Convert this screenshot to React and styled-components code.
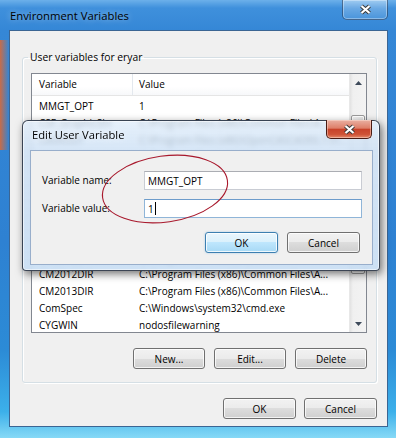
import React from "react";
import styled, { createGlobalStyle, css } from "styled-components";

const GlobalStyle = createGlobalStyle`
  html, body { margin: 0; padding: 0; }
  body {
    width: 396px;
    height: 438px;
    overflow: hidden;
    background: #2a7fd0;
    font-family: "Open Sans", "Noto Sans", "Liberation Sans", sans-serif;
    font-size: 10px;
    color: #000;
  }
  *, *::before, *::after { box-sizing: border-box; }
`;

const Window = styled.div`
  position: relative;
  width: 396px;
  height: 438px;
  display: flex;
  flex-direction: column;
  padding: 0 8px 11px 9px;
  background:
    linear-gradient(90deg, rgba(226, 104, 48, 0.85) 0px, rgba(226, 104, 48, 0) 9px) 0 40px / 9px 110px no-repeat,
    linear-gradient(180deg, #6cb0ea 0px, #3f90dc 8px, #3587d6 30px, #2e81d2 55%, #2c8bd6 80%, #3cb0ea 94%, #86d9f6 100%);
`;

const TitleBar = styled.div`
  height: 30px;
  flex: none;
  display: flex;
  justify-content: space-between;
  align-items: flex-start;
`;

const WindowTitle = styled.div`
  padding-left: 1px;
  line-height: 32px;
  font-size: 11.3px;
  color: #000;
  text-shadow: 0 0 6px rgba(255, 255, 255, 0.55);
`;

const closeBase = css`
  width: 46px;
  display: flex;
  align-items: center;
  justify-content: center;
  border-top: none;
  border-radius: 0 0 5px 5px;
`;

const FrameClose = styled.div`
  ${closeBase};
  height: 20px;
  border: 1px solid rgba(20, 40, 70, 0.55);
  border-top: none;
  background: linear-gradient(180deg, rgba(255, 255, 255, 0.35), rgba(255, 255, 255, 0.08));
  box-shadow: inset 0 0 0 1px rgba(255, 255, 255, 0.35);
`;

const RedClose = styled.div`
  ${closeBase};
  height: 19px;
  margin-top: -1px;
  margin-right: 1px;
  border: 1px solid #4a1c14;
  border-top: none;
  background: linear-gradient(180deg, #eab0a2 0%, #de7f69 45%, #c8432a 52%, #cf5336 80%, #e3896a 100%);
  box-shadow: inset 0 0 0 1px rgba(255, 230, 220, 0.45);
`;

const Client = styled.div`
  flex: 1;
  display: flex;
  flex-direction: column;
  background: #f0f0f0;
  border: 1px solid #3b6593;
  padding: 19px 10px 0 12px;
`;

const GroupBox = styled.fieldset`
  margin: 0;
  min-width: 0;
  padding: 9px 9px 13px 8px;
  border: 1px solid #d5dfe5;
  border-radius: 3px;
  box-shadow: 1px 1px 0 #fff, inset 1px 1px 0 #fff;
`;

const GroupLegend = styled.legend`
  padding: 0 2px;
  margin-left: -3px;
  line-height: 14px;
  font-size: 10.3px;
`;

const ListView = styled.div`
  height: 260px;
  display: flex;
  border: 1px solid #828790;
  background: #fff;
  overflow: hidden;
`;

const ListBody = styled.div`
  flex: 1;
  min-width: 0;
  display: flex;
  flex-direction: column;
`;

const HeaderRow = styled.div`
  display: grid;
  grid-template-columns: 101px 1fr;
  height: 22px;
  flex: none;
  border-bottom: 1px solid #e5e5e5;
  background: linear-gradient(180deg, #ffffff 0%, #ffffff 60%, #f7f8fa 100%);
`;

const HeaderCell = styled.div`
  line-height: 21px;
  padding-left: ${(p) => (p.$first ? 7 : 6)}px;
  border-right: ${(p) => (p.$first ? "1px solid #e3e8ee" : "none")};
`;

const Rows = styled.div`
  padding-top: 2px;
  display: flex;
  flex-direction: column;
`;

const Row = styled.div`
  display: grid;
  grid-template-columns: 100px 1fr;
  height: 16.85px;
  flex: none;
  line-height: 16.85px;
`;

const Cell = styled.div`
  padding-left: 7px;
  white-space: nowrap;
  overflow: hidden;
`;

const ScrollBar = styled.div`
  width: 17px;
  flex: none;
  display: flex;
  flex-direction: column;
  background: linear-gradient(90deg, #e2e2e2 0px, #f0f0f0 3px, #f3f3f3 100%);
  border-left: 1px solid #e8e8e8;
`;

const ScrollButton = styled.div`
  height: 17px;
  flex: none;
  display: flex;
  align-items: center;
  justify-content: center;
`;

const ScrollTrack = styled.div`
  flex: 1;
  display: flex;
  flex-direction: column;
  padding: 24px 1px 0 1px;
`;

const Thumb = styled.div`
  height: 159px;
  border: 1px solid #9b9b9b;
  border-radius: 2px;
  background: linear-gradient(90deg, #f4f4f4, #e4e4e4);
  box-shadow: inset 0 0 0 1px #fff;
`;

const ButtonRow = styled.div`
  display: flex;
  justify-content: flex-end;
  gap: ${(p) => p.$gap || 9}px;
  margin-top: ${(p) => p.$top}px;
  padding-right: ${(p) => p.$right || 0}px;
`;

const Button = styled.button`
  width: ${(p) => p.$w}px;
  height: 21px;
  padding: 0;
  font-family: inherit;
  font-size: 10px;
  color: #000;
  border: 1px solid #707070;
  border-radius: 3px;
  background: linear-gradient(180deg, #f2f2f2 0%, #ebebeb 50%, #dddddd 50%, #cfcfcf 100%);
  box-shadow: inset 0 0 0 1px rgba(255, 255, 255, 0.75);
  ${(p) =>
    p.$default &&
    css`
      border-color: #3c7fb1;
      background: linear-gradient(180deg, #eaf6fd 0%, #d9f0fc 50%, #bee6fd 50%, #a7d9f5 100%);
      box-shadow: inset 0 0 0 1px rgba(255, 255, 255, 0.8), 0 0 2px rgba(80, 160, 220, 0.5);
    `}
`;

const EditDialog = styled.div`
  position: absolute;
  left: 22px;
  top: 120px;
  width: 358px;
  height: 151px;
  display: flex;
  flex-direction: column;
  padding: 0 6px 5px 7px;
  border: 1px solid rgba(30, 40, 55, 0.85);
  border-radius: 6px 6px 4px 4px;
  background: linear-gradient(180deg, rgba(224, 237, 250, 0.8) 0%, rgba(206, 225, 245, 0.84) 30px, rgba(200, 222, 244, 0.9) 100%);
  backdrop-filter: blur(2.5px);
  box-shadow: 2px 3px 8px rgba(0, 0, 0, 0.55), inset 0 0 0 1px rgba(255, 255, 255, 0.55);
`;

const DialogTitleBar = styled.div`
  height: 29px;
  flex: none;
  display: flex;
  justify-content: space-between;
  align-items: flex-start;
`;

const DialogTitle = styled.div`
  padding-left: 2px;
  line-height: 28px;
  font-size: 11.2px;
  text-shadow: 0 0 6px rgba(255, 255, 255, 0.8);
`;

const DialogClient = styled.div`
  flex: 1;
  display: flex;
  flex-direction: column;
  background: #f0f0f0;
  border: 1px solid #98aecb;
  padding: 20px 10px 0 11px;
`;

const FormGrid = styled.div`
  display: grid;
  grid-template-columns: 102px 1fr;
  row-gap: 9px;
  align-items: center;
`;

const FieldLabel = styled.div`
  line-height: 19px;
`;

const TextBox = styled.div`
  height: 19px;
  display: flex;
  align-items: center;
  padding: 0 3px;
  background: #fff;
  border: 1px solid ${(p) => (p.$focused ? "#8fb5d8" : "#c9ccd3")};
  border-top-color: ${(p) => (p.$focused ? "#6d9ccb" : "#abadb3")};
  white-space: nowrap;
`;

const Caret = styled.span`
  display: inline-block;
  width: 1px;
  height: 13px;
  margin-left: 1px;
  background: #000;
`;

const Annotation = styled.svg`
  position: absolute;
  left: 0;
  top: 0;
  pointer-events: none;
`;

const XGlyph = () => (
  <svg width="13" height="11" viewBox="0 0 13 11">
    <path d="M2.5 2 L10.5 9 M10.5 2 L2.5 9" stroke="#3b3b3b" strokeWidth="4.2" strokeLinecap="butt" fill="none" />
    <path d="M2.5 2 L10.5 9 M10.5 2 L2.5 9" stroke="#ffffff" strokeWidth="2.2" strokeLinecap="butt" fill="none" />
  </svg>
);

const Arrow = ({ down }) => (
  <svg width="7" height="4" viewBox="0 0 7 4">
    <path d={down ? "M0 0 L7 0 L3.5 4 Z" : "M0 4 L7 4 L3.5 0 Z"} fill="#3d4a5a" />
  </svg>
);

const longPath = "C:\\Program Files (x86)\\Common Files\\A...";

const rows = [
  ["MMGT_OPT", "1"],
  ["CSF_GraphicShr", "C:\\Program Files (x86)\\Common Files\\A..."],
  ["CASROOT", "C:\\Program Files (x86)\\OpenCASCADE6.7.0\\..."],
  ["CM2008DIR", longPath],
  ["CM2009DIR", longPath],
  ["CM2010DIR", longPath],
  ["CM2010SP1DIR", longPath],
  ["CM2011DIR", longPath],
  ["CM2011SP1DIR", longPath],
  ["CM2012SP1DIR", longPath],
  ["CM2012DIR", longPath],
  ["CM2013DIR", longPath],
  ["ComSpec", "C:\\Windows\\system32\\cmd.exe"],
  ["CYGWIN", "nodosfilewarning"],
];

export default function App() {
  return (
    <>
      <GlobalStyle />
      <Window>
        <TitleBar>
          <WindowTitle>Environment Variables</WindowTitle>
          <FrameClose>
            <XGlyph />
          </FrameClose>
        </TitleBar>
        <Client>
          <GroupBox>
            <GroupLegend>User variables for eryar</GroupLegend>
            <ListView>
              <ListBody>
                <HeaderRow>
                  <HeaderCell $first>Variable</HeaderCell>
                  <HeaderCell>Value</HeaderCell>
                </HeaderRow>
                <Rows>
                  {rows.map(([name, value]) => (
                    <Row key={name}>
                      <Cell>{name}</Cell>
                      <Cell>{value}</Cell>
                    </Row>
                  ))}
                </Rows>
              </ListBody>
              <ScrollBar>
                <ScrollButton>
                  <Arrow />
                </ScrollButton>
                <ScrollTrack>
                  <Thumb />
                </ScrollTrack>
                <ScrollButton>
                  <Arrow down />
                </ScrollButton>
              </ScrollBar>
            </ListView>
            <ButtonRow $top={15}>
              <Button $w={72}>New...</Button>
              <Button $w={72}>Edit...</Button>
              <Button $w={72}>Delete</Button>
            </ButtonRow>
          </GroupBox>
          <ButtonRow $top={15} $gap={8}>
            <Button $w={73}>OK</Button>
            <Button $w={73}>Cancel</Button>
          </ButtonRow>
        </Client>

        <EditDialog>
          <DialogTitleBar>
            <DialogTitle>Edit User Variable</DialogTitle>
            <RedClose>
              <XGlyph />
            </RedClose>
          </DialogTitleBar>
          <DialogClient>
            <FormGrid>
              <FieldLabel>Variable name:</FieldLabel>
              <TextBox>MMGT_OPT</TextBox>
              <FieldLabel>Variable value:</FieldLabel>
              <TextBox $focused>
                1<Caret />
              </TextBox>
            </FormGrid>
            <ButtonRow $top={14} $right={2}>
              <Button $w={73} $default>
                OK
              </Button>
              <Button $w={73}>Cancel</Button>
            </ButtonRow>
          </DialogClient>
        </EditDialog>

        <Annotation width="396" height="438" viewBox="0 0 396 438">
          <ellipse
            cx="165"
            cy="189"
            rx="63"
            ry="33"
            transform="rotate(-8 165 189)"
            fill="none"
            stroke="#a8182c"
            strokeWidth="1.1"
          />
        </Annotation>
      </Window>
    </>
  );
}
